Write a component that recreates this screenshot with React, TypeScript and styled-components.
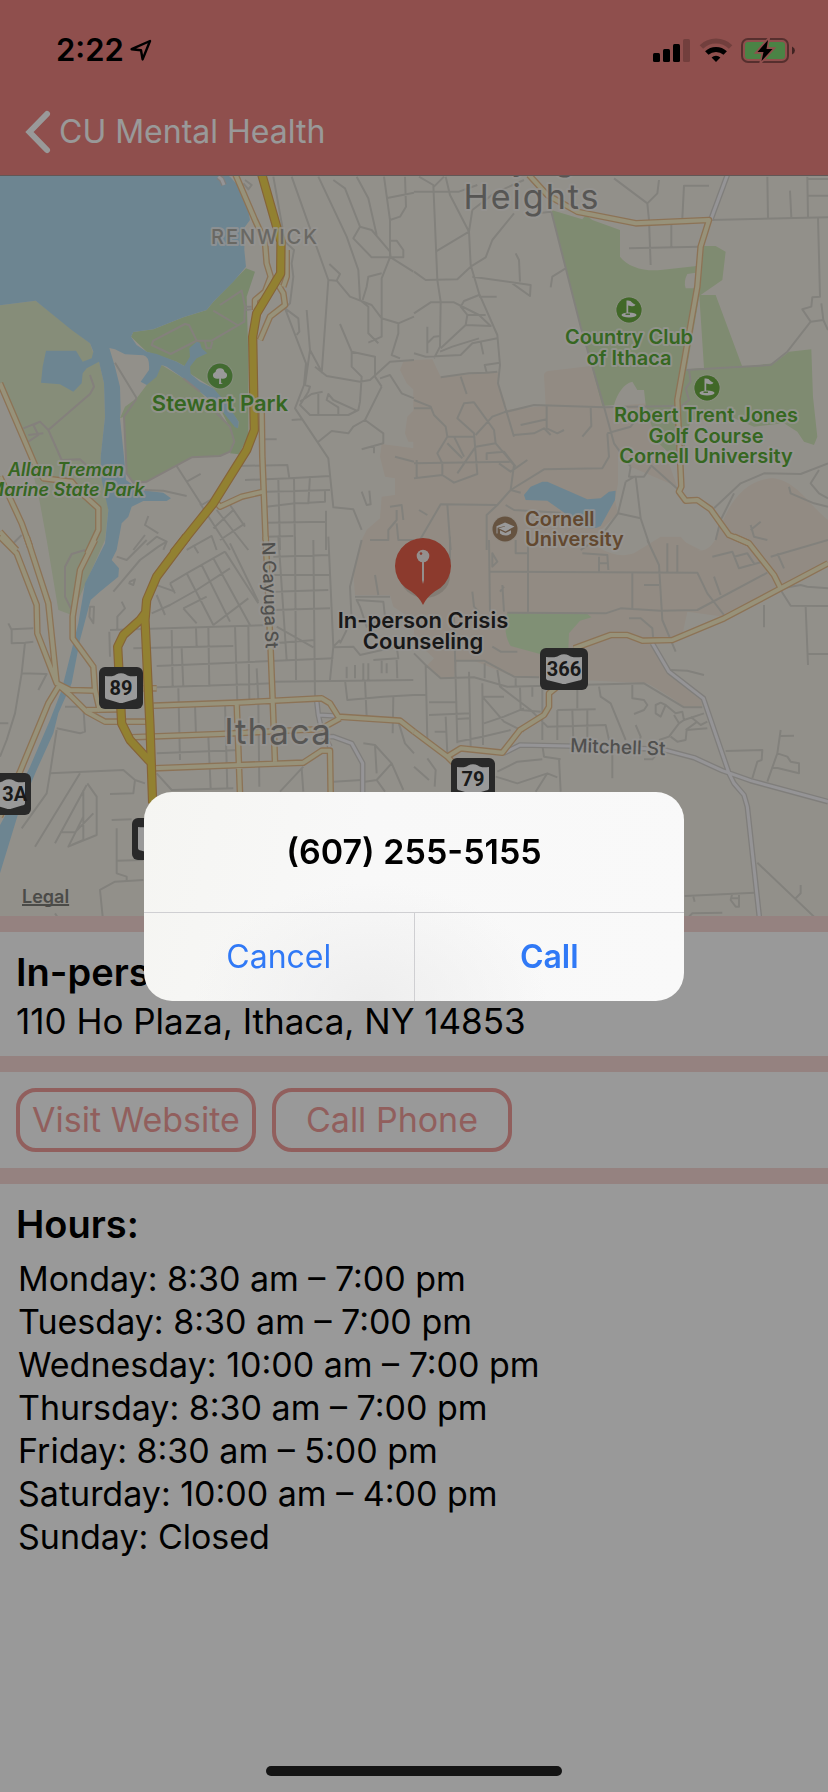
import React from "react";
import styled, { createGlobalStyle } from "styled-components";

const GlobalStyle = createGlobalStyle`
  *, *::before, *::after { box-sizing: border-box; }
  body { margin: 0; background: #ffffff; }
  body, button { font-family: Inter, "Liberation Sans", sans-serif; }
`;

const Page = styled.div`
  position: relative;
  display: flex;
  flex-direction: column;
  min-height: 100vh;
  background: #ffffff;
  color: #000000;
`;

const Header = styled.header`
  background: #ee8480;
  border-bottom: 1px solid #a3918f;
`;

const StatusBar = styled.div`
  display: flex;
  align-items: center;
  justify-content: space-between;
  height: 88px;
  padding: 12px 33px 0 56px;
`;

const StatusGroup = styled.div<{ $gap: number }>`
  display: flex;
  align-items: center;
  gap: ${(p) => p.$gap}px;
`;

const Clock = styled.span`
  font-size: 31px;
  font-weight: 600;
  line-height: 40px;
`;

const NavBar = styled.nav`
  display: flex;
  align-items: center;
  height: 87px;
  padding: 0 24px;
`;

const BackButton = styled.button`
  display: flex;
  align-items: center;
  gap: 7px;
  padding: 0;
  border: 0;
  background: none;
  color: #ffffff;
  font-size: 32px;
  line-height: 44px;
`;

const MapArea = styled.section`
  position: relative;
  aspect-ratio: 828 / 740;
  overflow: hidden;
  background: #f4f0e7;

  > svg { display: block; width: 100%; height: 100%; }
`;

const LegalLink = styled.a`
  position: absolute;
  left: 22px;
  bottom: 7px;
  color: #7d7d79;
  font-size: 18px;
  font-weight: 600;
  line-height: 24px;
  text-decoration-thickness: 2px;
  text-decoration-skip-ink: none;
`;

const Divider = styled.div`
  height: 16px;
  background: #f8d9d5;
`;

const Section = styled.section`
  padding: 16px 16px 10px;
`;

const SectionTitle = styled.h2`
  margin: 0;
  font-size: 38px;
  font-weight: 600;
  line-height: 48px;
  white-space: nowrap;
`;

const Address = styled.p`
  margin: 0;
  font-size: 35px;
  line-height: 50px;
`;

const Actions = styled.div`
  display: flex;
  gap: 16px;
  padding: 16px;
`;

const OutlineButton = styled.button`
  width: 240px;
  height: 64px;
  padding: 0;
  border: 4px solid #f29f9c;
  border-radius: 20px;
  background: none;
  color: #f29f9c;
  font-size: 34px;
  line-height: 44px;
  white-space: nowrap;
`;

const HoursList = styled.ul`
  margin: 9px 0 0;
  padding: 0 2px;
  list-style: none;
  font-size: 34px;
  line-height: 43px;
`;

const Scrim = styled.div`
  position: absolute;
  inset: 0;
  background: rgba(0, 0, 0, 0.4);
`;

const DialogLayer = styled.div`
  position: fixed;
  inset: 0;
  display: flex;
  align-items: center;
  justify-content: center;
`;

const Dialog = styled.div`
  width: 540px;
  overflow: hidden;
  border-radius: 28px;
  background:
    radial-gradient(ellipse at 42% 100%, #eeeeee, rgba(238, 238, 238, 0) 40%),
    linear-gradient(100deg, #f5f5f2, #f8f8f8 40%, #f9f9f9);
`;

const DialogTitle = styled.h1`
  margin: 0;
  font-size: 34px;
  font-weight: 600;
  line-height: 120px;
  text-align: center;
`;

const DialogActions = styled.div`
  display: flex;
  border-top: 1px solid #cfcfd2;
`;

const DialogButton = styled.button<{ $strong?: boolean }>`
  flex: 1;
  height: 88px;
  padding: 0;
  border: 0;
  background: none;
  color: #3079f6;
  font-size: 32px;
  font-weight: ${(p) => (p.$strong ? 600 : 400)};

  & + & { border-left: 1px solid #cfcfd2; }
`;

const HomeIndicator = styled.div`
  position: fixed;
  bottom: 16px;
  left: 50%;
  width: 296px;
  height: 10px;
  transform: translateX(-50%);
  border-radius: 5px;
  background: #141414;
`;

/* ---------- status icons ---------- */

const LocationIcon = () => (
  <svg width="22" height="22" viewBox="0 0 22 22" fill="none" stroke="#000" strokeWidth="2.4" strokeLinejoin="round" aria-hidden="true">
    <path d="M1.6 10.2 L20 2 L12.6 20.4 L11 11.2Z" />
  </svg>
);

const SignalIcon = () => (
  <svg width="38" height="25" viewBox="0 0 38 25" aria-hidden="true">
    <rect x="0" y="15" width="7" height="9" rx="1.5" />
    <rect x="10" y="11" width="7" height="13" rx="1.5" />
    <rect x="20" y="6" width="7" height="18" rx="1.5" />
    <rect x="30" y="1" width="7" height="23" rx="1.5" opacity="0.2" />
  </svg>
);

const WifiIcon = () => (
  <svg width="34" height="25" viewBox="0 0 34 25" fill="none" stroke="#000" aria-hidden="true">
    <path d="M2.4 9 A21 21 0 0 1 31.6 9" strokeWidth="5" opacity="0.2" />
    <path d="M7.8 15 A13.5 13.5 0 0 1 26.2 15" strokeWidth="5" />
    <path d="M12.6 19.6 A6.4 6.4 0 0 1 21.4 19.6 L17 24Z" fill="#000" stroke="none" />
  </svg>
);

const BatteryIcon = () => (
  <svg width="54" height="27" viewBox="0 0 54 27" aria-hidden="true">
    <rect x="1" y="2" width="46" height="23" rx="6" fill="none" stroke="#000" strokeOpacity="0.4" strokeWidth="2" />
    <path d="M51 9.5 Q54 11 54 13.5 Q54 16 51 17.5Z" fill="#000" opacity="0.55" />
    <rect x="4" y="5" width="40" height="17" rx="3" fill="#7ddb74" />
    <path d="M27 3 L16.5 15 H22.5 L20.5 24 L31.5 12 H25.5Z" fill="#000" stroke="#ee8480" strokeWidth="3.4" paintOrder="stroke" />
  </svg>
);

const ChevronIcon = () => (
  <svg width="28" height="46" viewBox="0 0 28 46" fill="none" stroke="#fff" strokeWidth="6" strokeLinecap="round" strokeLinejoin="miter" aria-hidden="true">
    <path d="M23 5 L5.5 23 L23 41" />
  </svg>
);

/* ---------- map ---------- */

/* The map is drawn in four quadrants: nw, ne, sw, se. */
const origins = ["0 -6", "414 -6", "0 364", "414 364"];

type Tiles = [string, string, string, string];

const minorRoads: Tiles = [
  `M820 20L855 215L882 240L875 280L880 320L870 400L855 415M875 20L985 330L965 610M955 20L1040 200L1075 300L1080 390L1105 410L1105 490L1135 520
  M1000 30L1035 55L1080 170L1115 180L1170 245L1172 262L1240 305M1070 20L1105 85L1130 195M1080 170L1060 205L1115 262L1210 262L1210 240L1190 212L1172 212
  M1152 20L1170 150L1170 262L1145 325L1145 500L1105 518M1158 85L1242 68M1215 20L1218 110L1200 140L1170 150M985 330L1010 332L1020 312L988 282
  M1010 332L1050 380L1115 405L1145 445L1195 460L1242 440M1145 310L1105 320L1100 350L1088 390M855 415L895 445L898 485L890 495
  M855 415L918 580L912 645L885 715L985 865L1000 1012L1060 1018L1085 1080M920 420L930 540L965 605M930 540L915 645L930 650L925 665L900 705L930 735L1045 735L1075 720L1080 695
  M1020 462L1055 545L1125 560L1125 620L1145 650M1055 545L1055 590L1085 620L1080 695M900 695L935 672L968 665M1070 722L1000 690L985 672L980 690L1015 712L1015 735M955 672L955 735
  M945 590L980 618L1080 635L1110 630L1170 575L1242 570M1145 650L1095 750L1060 770L1045 790L995 783L955 815M1140 625L1170 615L1205 670L1242 685
  M1195 460L1195 490L1175 555L1200 565M1095 750L1150 790L1150 820L1085 838M1122 825L1122 850M790 808L830 808M875 750L905 748
  M712 888L862 885L868 925L990 918M735 930L868 925M800 965L990 960M835 930L840 1140M882 925L885 1140M930 918L925 1000L885 1000M975 960L975 995L925 998
  M800 1010L885 1000M800 1058L978 1055M978 1022L978 1140M800 1100L880 1098M1085 965L1100 1005L1112 1003L1108 962
  M1190 1020L1190 1050L1165 1080L1165 1110L1110 1110M1190 1060L1195 1110L1242 1110M1185 860L1242 875M1170 1010L1205 1005L1210 1050
  M530 888L605 1005L640 985M560 935L602 912M435 960L490 962L560 978M600 1000L690 1140M650 1020L745 1140M690 1005L735 1070M640 1075L700 1020M660 1110L735 1060
  M445 1038L435 1065L475 1090M435 1095L400 1140M440 1125L470 1100L500 1115L490 1140M560 1140L635 1098L650 1140M345 578L410 685
  M735 30L755 45L745 58L730 40M735 410L755 410M735 420L755 418M40 1120L65 1095`,
  `M0 65L135 65L190 45M15 20L58 45L70 330L80 395L78 530L60 565M95 20L108 75L165 185L170 285L195 370L250 495L258 585L252 640L300 800M90 20L60 50
  M65 245L165 185L175 120L240 70L330 30M300 130L235 210L215 262L170 290L130 328L35 330L0 305M175 320L350 345L348 378L295 340M305 250L315 270L318 335M455 295L415 320L410 352
  M0 430L50 397L120 397L195 435L230 468L155 465L160 435L140 410L150 393L195 375M195 380L248 380M155 465L80 535M160 435L215 435
  M0 550L35 560L140 555L175 520L250 505M40 470L40 550M78 545L115 530L195 505M200 515L208 553M40 520L60 500L80 498M80 622L165 610L218 608L212 585L258 578M140 620L158 672M218 608L250 605
  M600 25L700 100L705 150L710 285M735 30L730 70L700 100M645 235L855 230M772 165L772 230M885 47L810 47L805 145M890 150L1242 142M1060 20L1062 145M1180 20L1182 142M1180 27L1242 27M1180 77L1242 77M1128 62L1132 142
  M1212 142L1218 380L1195 382L1192 410L1165 418L1190 455L1228 450L1222 400M1190 455L1120 545L1070 585L815 600M1228 450L1242 480M412 125L500 470L570 710L600 820L650 890M412 125L370 130
  M270 727L235 740L185 795M270 727L360 705L570 712L790 708M398 705L398 775L430 790L450 780M320 765L398 748M300 795L360 790L390 775L410 795M530 712L532 768L505 800
  M580 790L650 770L680 730M580 790L585 860L565 895L390 898L290 960L250 1005L218 1035L218 1140M0 690L50 710L60 735L95 770L100 800L70 850L85 880L85 915L120 938L190 912L180 790L130 745L150 700L180 697L240 780L245 820L185 830L130 910
  M0 880L290 875M245 820L300 885L290 960M100 800L180 800M100 820L145 865M120 800L150 860M0 715L50 715M0 925L85 915M218 870L218 850L270 845L305 890M255 880L290 905L340 870M8 870L8 925
  M250 1005L80 1003L0 1140M100 1005L110 1140M15 1020L40 1035M275 1005L300 1020L440 1028M290 960L320 968
  M710 885L800 965M650 890L645 920L690 920L710 890M635 935L612 1030L560 1100L500 1140M665 920L680 1045L705 1120M612 1030L680 1045M635 935L665 918
  M900 1015L980 940L1050 910L1160 912L1242 880M1125 950L1130 970L1200 1000L1242 1010M1215 900L1190 940L1215 970L1242 985M905 1110L920 1050L960 970M1010 1065L1020 1100L1060 1110M1010 1080L1040 1055`,
  `M350 50L380 60L440 0M340 155L420 60L475 20L500 5M390 125L405 118L400 135L388 130ZM365 185L375 205L352 230L352 268M270 200L282 200L280 250L268 230Z
  M455 220L510 195L590 150L690 85M510 130L560 100L675 35M470 165L495 225M510 130L525 160M560 100L640 255M605 75L690 245M640 55L750 255M675 35L775 190M690 10L775 185M550 205L590 250M550 205L620 170M640 255L745 175M580 15L595 40M455 130L525 155
  M330 270L820 255M400 325L700 318M470 378L1000 355M470 442L820 430M328 275L330 350M515 270L518 440M545 325L550 440M588 265L590 320M625 262L628 440M705 258L712 485M745 258L748 480M535 445L540 660M625 590L632 745M585 495L588 585M675 490L682 745M775 490L778 740M770 385L775 480M470 640L720 630
  M820 50L990 45M820 105L990 105M835 -10L860 360M885 -10L888 420M940 0L945 470M985 -10L1000 320L990 420M820 155L985 150M820 210L990 205M830 260L940 322M820 310L945 300M820 425L1240 420M1035 420L1042 480L1150 470L1242 465
  M1040 380V415M1065 375V415M1090 370V420M1105 370V420M1145 360V400M1120 360L1195 355L1190 320M1095 425L1100 530M1180 470L1178 580M1000 320L1020 300M1020 310L1040 270M1070 180L1150 185L1155 230L1100 260L1080 200ZM1085 0L1050 140L1055 240M1125 105L1135 165M1065 170L1170 170
  M1000 322L1060 320L1080 345L1190 320M1160 370V400M1190 360L1192 415
  M25 250L35 270L35 310L75 308L100 305M35 268L100 265M75 308L65 400L45 520L20 600L0 650M65 400L140 402L115 450M0 550L25 550M170 570L150 700L140 760L65 865M150 700L370 690L405 720L435 730M170 565L240 580L255 575L250 500L195 500
  M240 700L105 920M260 735L165 910M250 750L250 900L215 915M262 730L290 770L290 885L205 920L250 830M180 877L225 877L280 820M330 762L400 760L405 720M335 840L395 838M350 865L350 1000L380 1010V1020M350 962L430 960M308 1130L300 1050L345 1025L430 1020M165 1120L175 1135
  M470 700L515 750L700 745M840 755L910 680M905 685L910 755M1090 610L1125 615L1175 670L1210 750M1125 615L1130 700M1095 725L1130 720L1155 755M1175 670L1130 720M1195 545L1215 610L1242 640M1000 725L1085 720`,
  `M108 -10L108 70M175 155L180 200L195 215M225 0L228 215M228 95L850 98L880 160L930 225M342 0L342 215M342 40L305 40V0M235 40L250 65L235 80ZM265 135L270 215M258 155L270 140M280 218L575 220L620 205L740 212L850 210L1060 98M655 98L655 205M690 135L735 135
  M505 40L580 45L583 90M555 50V95M555 70L580 70M700 0L735 75L745 240L785 335M760 10V95M790 15V95M900 110L920 165M895 50L955 35L975 85L1045 65M960 50L1000 40L1020 70M1090 40L1110 85M1070 50L1242 0M645 235L680 235L715 265L718 300
  M1100 150L1130 197L1242 198M1105 145L1160 135L1180 140L1242 145M1050 195V262M1175 200L1182 375M1182 342L1242 342
  M0 465L35 465M35 375L40 600M0 340L35 375L80 415L180 412L280 440L690 430L810 502L865 502M120 362L210 362L300 410L375 412M120 230L130 610M165 395L170 620M212 370V415M45 487L130 487M45 525L170 520M95 530L100 640M62 575L98 575M130 537L165 535M130 605L205 590L290 570
  M250 390L258 440L350 510L400 560L575 555L585 600M318 440L320 510L380 515M205 430L207 615M205 470L270 470M205 470L270 545L330 575M210 550L270 530L330 505M235 320L260 335L310 335M490 450V505M430 510L545 508M475 510L478 600M520 510V600M430 510L430 600M555 440L560 470L590 490L635 600M385 440L385 600M305 415V440M355 440V470
  M655 430L655 475L690 480L700 495L690 510L660 522M870 405L820 392L770 390M725 495L740 488L755 495L740 530L725 520ZM755 495L785 520L805 515L810 540L795 550L780 525M810 540L870 520M830 530L860 555L880 545M795 550L765 590L735 600M770 590L790 605L815 600L818 570L880 565M815 570L850 545
  M665 555L680 590L675 610M595 640V715M690 658L715 658L730 640M935 633L1045 630L1043 660L1030 665L1015 715M1100 570L1090 640L1060 725M1100 588L1140 587M1090 640L1120 650L1130 665L1155 670L1155 700L1075 680
  M250 695L310 665L385 658M245 710L310 730L400 700L430 712M400 700L365 755M435 655L440 755M385 615L390 650L440 658M40 655L65 690L62 740M0 680L45 720M812 1068L1022 1058M955 1060L950 1080L965 1100L975 1100L975 1060M952 1075H975M838 1070L842 1085M825 1130L835 1120L925 1118M1030 968L1200 1130M1160 1035L1160 1060L1145 1075`,
];

const parkPaths: Tiles = [
  `M660 405L725 362L735 410L733 455L635 512L590 512L512 552L455 525L460 512L555 462L567 465L590 512M640 422L712 465M615 515L620 535L632 535L637 515
  M550 625L600 665M650 730L690 770L703 815L690 845L660 858L575 862L440 935L400 938L380 910L372 740L410 685M70 775L120 755L145 780L270 672L282 650L270 615M120 755L100 765L115 795L85 815M145 780L185 870L240 868L275 900M85 795L130 790`,
  `M825 600L830 635L815 655L825 690L800 710`,
  `M255 30L215 42L195 80L195 170L215 210`,
  ``,
];

const creamRoads: Tiles = [
  `M705 10L765 150L795 215L800 280L812 320L795 365L765 390L765 420M835 345L850 370L855 405L810 440L780 510M860 240L860 320L850 350M785 720L787 860L797 1110M645 992L660 1010L725 980L790 965
  M0 640L105 885L130 925L215 935L240 965L295 1015L295 1080L262 1150M0 920L65 1060L90 1130M0 1085L50 1140`,
  `M345 15L400 75L490 125L665 160L885 150L860 230L850 350L790 690L802 950L795 965L815 992L850 990L890 1018L945 1095L1005 1120`,
  `M797 -10L812 330L818 480L825 665M285 0L240 90L218 230L218 295L280 380L285 450L300 515M80 -10L145 190L170 430M0 -10L50 40L110 195L112 280L170 430L210 450L285 452
  M175 435L210 465L260 515L315 545L440 545M175 440L145 490L60 695L0 830M260 510L360 508M460 497L710 488L965 475L990 490L1015 530L1200 542L1242 575M390 592L660 582L900 570L960 568L1020 535M460 685L910 668L965 632L990 632L992 760M710 488L720 760M430 445H470`,
  `M0 575L100 650L140 690M100 650L140 625L265 638L318 570L390 525L405 500L405 460L430 440M480 325L590 285L640 285L685 302L775 300L930 235L1100 145L1242 70M960 -10L1005 10L1080 105L1100 145`,
];

const whiteRoads: Tiles = [
  `M655 20L665 28L672 45`,
  `M940 15L890 150`,
  `M950 480L955 525L1010 528M955 525L965 570L990 620M965 590L1000 590L1055 610L1088 670L1088 760`,
  `M268 640L318 615L460 618L745 628L840 653L925 692L1010 722L1242 785M715 310L765 395L868 475L945 700L960 730L990 765L1000 800L1037 1140`,
];

const highways: Tiles = [
  `M783 5L830 170L843 215L842 310L770 430L758 500L763 780L740 840L640 1000L520 1150`,
  ``,
  `M560 -10L470 110L440 180L435 240L450 560L458 790M435 220L420 240L370 285L353 320L365 550L390 600L450 665`,
  ``,
];

const Roads = ({ tiles, color, width }: { tiles: Tiles; color: string; width: number }) => (
  <g fill="none" stroke={color} strokeWidth={width} strokeLinejoin="round">
    {tiles.map((d, i) => (
      <path key={i} d={d} transform={`translate(${origins[i]}) scale(0.33333)`} />
    ))}
  </g>
);

const Terrain = () => (
  <>
    <g transform="translate(0 -6) scale(0.33333)">
      <path fill="#dfebca" d="M0 406L107 392L270 520L280 550L297 575L312 640L315 740L302 860L325 1020L315 1110L235 1290L215 1335L175 1320L140 1110L118 990L85 850L0 640Z" />
      <path fill="#cae5b4" d="M738 295L640 395L620 420L550 442L460 478L400 486L393 500L440 545L530 575L553 588L572 612L640 655L716 755L714 775L660 715L690 775L703 815L690 850L716 853L745 800L745 560L740 380L765 305Z" />
      <path fill="#d4e8bc" d="M485 585L550 625L600 665L660 730L690 775L703 815L690 845L660 858L575 862L520 890L440 935L400 938L380 910L372 740L360 745L375 710L410 685Z" />
      <path fill="#f3e8da" d="M1242 570L1210 575L1200 600L1220 640L1242 660ZM1242 720L1222 740L1215 790L1225 815L1242 815ZM1242 835L1145 822L1140 860L1155 920L1185 925L1185 975L1145 980L1140 1045L1100 1080L1085 1110L1060 1210L1065 1275L1170 1275L1180 1310L1242 1350Z" />
      <path fill="#b6def2" d="M0 0H652L690 20L735 70L750 150L735 170L733 240L738 290L700 335L640 395L620 420L550 442L460 478L400 486L393 500L410 525L440 545L470 552L530 575L553 588L570 560L568 535L590 515L600 518L605 535L622 550L590 565L570 590L572 612L600 635L640 655L680 700L716 755L714 775L705 772L660 715L600 665L550 625L500 590L485 585L470 620L440 645L422 635L447 600Q450 560 430 556L375 553L345 538L328 534L345 590L360 650L362 720L360 745L372 860L378 930L420 960L490 968L513 985L500 993L430 993L395 1010L385 1040L365 1060L350 1140L335 1170L357 1195L355 1220L300 1265L272 1290L240 1410L215 1540L175 1630L160 1690L110 1800L55 1930L0 2110V1965L30 1910L90 1790L150 1650L185 1560L215 1440L235 1360L255 1240L315 1120L325 1020L305 930L302 860L315 740L312 640L297 575L260 595L248 610L245 640L220 665L180 643L123 638L128 590L138 542L228 542L248 575L275 565L280 545L270 520L215 480L107 392L0 406Z" />
    </g>
    <g transform="translate(414 -6) scale(0.33333)">
      <path fill="#f3e8da" d="M-2 570L55 568L80 620L255 605L250 640L275 700L270 720L395 708L390 615Q392 602 410 602L530 588L570 710L700 700L790 950L650 890L612 860L612 940L603 990L612 1030L500 1140H-2ZM905 1115C940 990 1000 925 1080 925C1150 935 1190 1010 1242 1050V1140H1010ZM700 1140L720 1115Q770 1090 820 1120L860 1140Z" />
      <path fill="#d4e8bc" d="M412 120L505 148L515 135L535 150L618 180V260C640 290 690 305 740 300L848 288L860 228H905L935 245L925 330L860 375H905L985 590L1080 580L1125 545L1192 538L1197 680L1210 800L1200 825L1170 815L1150 785L1110 760L1020 770L960 745L830 750L810 840L760 845L735 820L710 760L695 705L690 660H670L655 635C630 640 610 670 600 705L565 708L500 470Z" />
      <path fill="#f4f0e7" d="M856 378L870 594L818 598ZM820 312L845 308L842 355H815Q808 335 820 312Z" />
      <path fill="#b6def2" d="M330 975L350 950L385 935L400 935L520 988L560 985L585 965L605 962L603 990L560 1068Q540 1080 510 1070L460 1035L400 992L335 990Z" />
    </g>
    <g transform="translate(414 364) scale(0.33333)">
      <path fill="#f3e8da" d="M-2 -10H500C550 20 600 60 660 40L740 -10H800C850 50 880 40 910 -10H1242V75L930 230L820 215L805 285L770 305L720 310L760 390L860 470L865 500H810Q770 470 700 430L300 410L180 362H130L120 412L80 415L40 375L60 355L0 300Z" />
      <path fill="#d5f0c4" d="M280 218H515L533 232L498 242L465 280L463 330L378 342L290 318Q265 280 280 218Z" />
    </g>
  </>
);

const MapLabel = styled.text<{ $size: number; $color: string; $weight?: number; $spacing?: number }>`
  font-family: Inter, "Liberation Sans", sans-serif;
  font-size: ${(p) => p.$size}px;
  font-weight: ${(p) => p.$weight ?? 600};
  letter-spacing: ${(p) => p.$spacing ?? 0}px;
  fill: ${(p) => p.$color};
  stroke: rgba(250, 248, 244, 0.75);
  stroke-width: 4px;
  stroke-linejoin: round;
  paint-order: stroke;
`;

const ShieldText = styled.text<{ $narrow: boolean }>`
  font-family: ${(p) => (p.$narrow ? '"Liberation Sans Narrow", ' : "")}Roboto, "Liberation Sans", sans-serif;
  font-size: 20px;
  font-weight: 700;
  fill: #2c2c2c;
`;

const Shield = ({ x, y, w = 44, label = "" }: { x: number; y: number; w?: number; label?: string }) => (
  <g transform={`translate(${x} ${y})`}>
    <rect width={w} height="42" rx="6" fill="#454545" />
    <path fill="#fff" d={`M6 9 Q${w / 2 - 7} 10 ${w / 2 - 5} 7.5 Q${w / 2} 5 ${w / 2 + 5} 7.5 Q${w / 2 + 7} 10 ${w - 6} 9 V30 Q${w - 6} 32 ${w - 9} 32.5 L${w / 2 + 3} 35.5 Q${w / 2} 36.5 ${w / 2 - 3} 35.5 L9 32.5 Q6 32 6 30Z`} />
    {label && <ShieldText x={w / 2} y="28" textAnchor="middle" $narrow={label.length > 2}>{label}</ShieldText>}
  </g>
);

const GolfIcon = ({ x, y }: { x: number; y: number }) => (
  <g transform={`translate(${x} ${y})`}>
    <circle r="13.5" fill="#e3ecd3" />
    <circle r="12.5" fill="#8fc566" />
    <circle r="12.5" fill="#62a63a" fillOpacity="0.75" />
    <ellipse cy="5" rx="7.5" ry="2.6" fill="#fff" />
    <path d="M-2.5 -9.5 H-1 Q2 -9.5 3 -7.5 Q4.5 -6 6.5 -5.2 Q5 -3 1.5 -4 L-0.8 -4.4 V4 H-2.5Z" fill="#fff" />
    <path d="M-3.5 4.2 H1" stroke="#62a63a" strokeWidth="1.3" />
  </g>
);

const MapDrawing = () => {
  const green = "#5aac38";
  return (
    <svg viewBox="0 0 828 740" preserveAspectRatio="xMidYMid slice" role="img" aria-label="Map of Ithaca">
      <Terrain />
      <Roads tiles={minorRoads} color="#d9d7cf" width={6} />
      <Roads tiles={parkPaths} color="#dcd5cf" width={6} />
      <Roads tiles={whiteRoads} color="#d5d3ce" width={17} />
      <Roads tiles={whiteRoads} color="#f8f7fb" width={9} />
      <Roads tiles={creamRoads} color="#eac090" width={20} />
      <Roads tiles={creamRoads} color="#fcf3cb" width={12} />
      <Roads tiles={highways} color="#dfa75c" width={28} />
      <Roads tiles={highways} color="#f3d853" width={21} />

      <MapLabel x="531" y="-6" textAnchor="middle" $size={34} $weight={400} $spacing={2} $color="#91908c">Cayuga</MapLabel>
      <MapLabel x="532" y="33" textAnchor="middle" $size={34} $weight={400} $spacing={2} $color="#91908c">Heights</MapLabel>
      <MapLabel x="265" y="68" textAnchor="middle" $size={20} $weight={500} $spacing={2} $color="#b0ada6">RENWICK</MapLabel>
      <MapLabel x="278" y="568" textAnchor="middle" $size={35} $weight={400} $spacing={1} $color="#91908c">Ithaca</MapLabel>

      <MapLabel x="220" y="235" textAnchor="middle" $size={22} $color={green}>Stewart Park</MapLabel>
      <MapLabel x="66" y="300" textAnchor="middle" fontStyle="italic" $size={18} $color={green}>Allan Treman</MapLabel>
      <MapLabel x="66" y="320" textAnchor="middle" fontStyle="italic" $size={18} $color={green}>Marine State Park</MapLabel>
      <MapLabel x="629" y="168" textAnchor="middle" $size={20} $color={green}>Country Club</MapLabel>
      <MapLabel x="629" y="189" textAnchor="middle" $size={20} $color={green}>of Ithaca</MapLabel>
      <MapLabel x="706" y="246" textAnchor="middle" $size={20} $color={green}>Robert Trent Jones</MapLabel>
      <MapLabel x="706" y="267" textAnchor="middle" $size={20} $color={green}>Golf Course</MapLabel>
      <MapLabel x="706" y="287" textAnchor="middle" $size={20} $color={green}>Cornell University</MapLabel>
      <MapLabel x="525" y="350" $size={20} $color="#a5794f">Cornell</MapLabel>
      <MapLabel x="525" y="370" $size={20} $color="#a5794f">University</MapLabel>
      <MapLabel x="570" y="576" transform="rotate(2 570 576)" $size={19} $weight={500} $color="#868583">Mitchell St</MapLabel>
      <MapLabel x="262" y="366" transform="rotate(88 262 366)" $size={18} $weight={500} $color="#868583">N Cayuga St</MapLabel>

      <g transform="translate(220 200)">
        <circle r="13.5" fill="#dce9cf" />
        <circle r="12.5" fill="#6fb252" />
        <path fill="#fff" d="M-1 8 L-0.8 2.5 Q-6 3.5 -7 0 Q-7.5 -3 -4.5 -4 Q-4 -8 0 -7.8 Q4 -8 4.5 -4 Q7.5 -3 7 0 Q6 3.5 1 2.5 L1.2 7 L3 8Z" />
      </g>
      <GolfIcon x={629} y={134} />
      <GolfIcon x={707} y={212} />
      <g transform="translate(505 353)">
        <circle r="13.5" fill="#efe4d6" />
        <circle r="12.5" fill="#aa8a6c" />
        <path fill="#fff" d="M0 -6.5 L9.5 -2.5 L0.5 2.5 L-6.5 -0.8 L0 -2.4 V-3 L-7.5 -1.3 V4.5 H-8.5 V-2.8ZM-5 1.2 L0.5 4 L6 1.2 V4.5 Q3 7 0.5 6.5 Q-3 6.5 -5 4.5Z" />
      </g>

      <Shield x={99} y={491} label="89" />
      <Shield x={-13} y={597} label="13A" />
      <Shield x={132} y={642} />
      <Shield x={540} y={472} w={48} label="366" />
      <Shield x={451} y={582} label="79" />

      <ellipse cx="425" cy="400" rx="25" ry="22" fill="#000" opacity="0.1" />
      <path fill="#e9614c" d="M423 429 Q420 422 411 415.3 A28 28 0 1 1 435 415.3 Q426 422 423 429Z" />
      <path fill="#f7efec" d="M422 385 H424 V404 L423 408 L422 404Z" />
      <circle cx="423" cy="380" r="6.3" fill="#f7efec" />
      <circle cx="421" cy="377.6" r="1.3" fill="#e9614c" />
      <MapLabel x="423" y="452" textAnchor="middle" $size={22} $color="#2b2b2b">In-person Crisis</MapLabel>
      <MapLabel x="423" y="473" textAnchor="middle" $size={22} $color="#2b2b2b">Counseling</MapLabel>
    </svg>
  );
};

const hours = [
  "Monday: 8:30 am – 7:00 pm",
  "Tuesday: 8:30 am – 7:00 pm",
  "Wednesday: 10:00 am – 7:00 pm",
  "Thursday: 8:30 am – 7:00 pm",
  "Friday: 8:30 am – 5:00 pm",
  "Saturday: 10:00 am – 4:00 pm",
  "Sunday: Closed",
];

export default function App() {
  return (
    <>
      <GlobalStyle />
      <Page>
        <Header>
          <StatusBar>
            <StatusGroup $gap={6}>
              <Clock>2:22</Clock>
              <LocationIcon />
            </StatusGroup>
            <StatusGroup $gap={8}>
              <SignalIcon />
              <WifiIcon />
              <BatteryIcon />
            </StatusGroup>
          </StatusBar>
          <NavBar>
            <BackButton type="button">
              <ChevronIcon />
              CU Mental Health
            </BackButton>
          </NavBar>
        </Header>
        <MapArea>
          <MapDrawing />
          <LegalLink href="#legal">Legal</LegalLink>
        </MapArea>
        <Divider />
        <Section>
          <SectionTitle>In-person Crisis Counseling</SectionTitle>
          <Address>110 Ho Plaza, Ithaca, NY 14853</Address>
        </Section>
        <Divider />
        <Actions>
          <OutlineButton type="button">Visit Website</OutlineButton>
          <OutlineButton type="button">Call Phone</OutlineButton>
        </Actions>
        <Divider />
        <Section>
          <SectionTitle>Hours:</SectionTitle>
          <HoursList>
            {hours.map((line) => (
              <li key={line}>{line}</li>
            ))}
          </HoursList>
        </Section>
        <Scrim />
      </Page>
      <DialogLayer>
        <Dialog role="alertdialog" aria-modal="true" aria-labelledby="call-number">
          <DialogTitle id="call-number">(607) 255-5155</DialogTitle>
          <DialogActions>
            <DialogButton type="button">Cancel</DialogButton>
            <DialogButton type="button" $strong>Call</DialogButton>
          </DialogActions>
        </Dialog>
      </DialogLayer>
      <HomeIndicator />
    </>
  );
}
